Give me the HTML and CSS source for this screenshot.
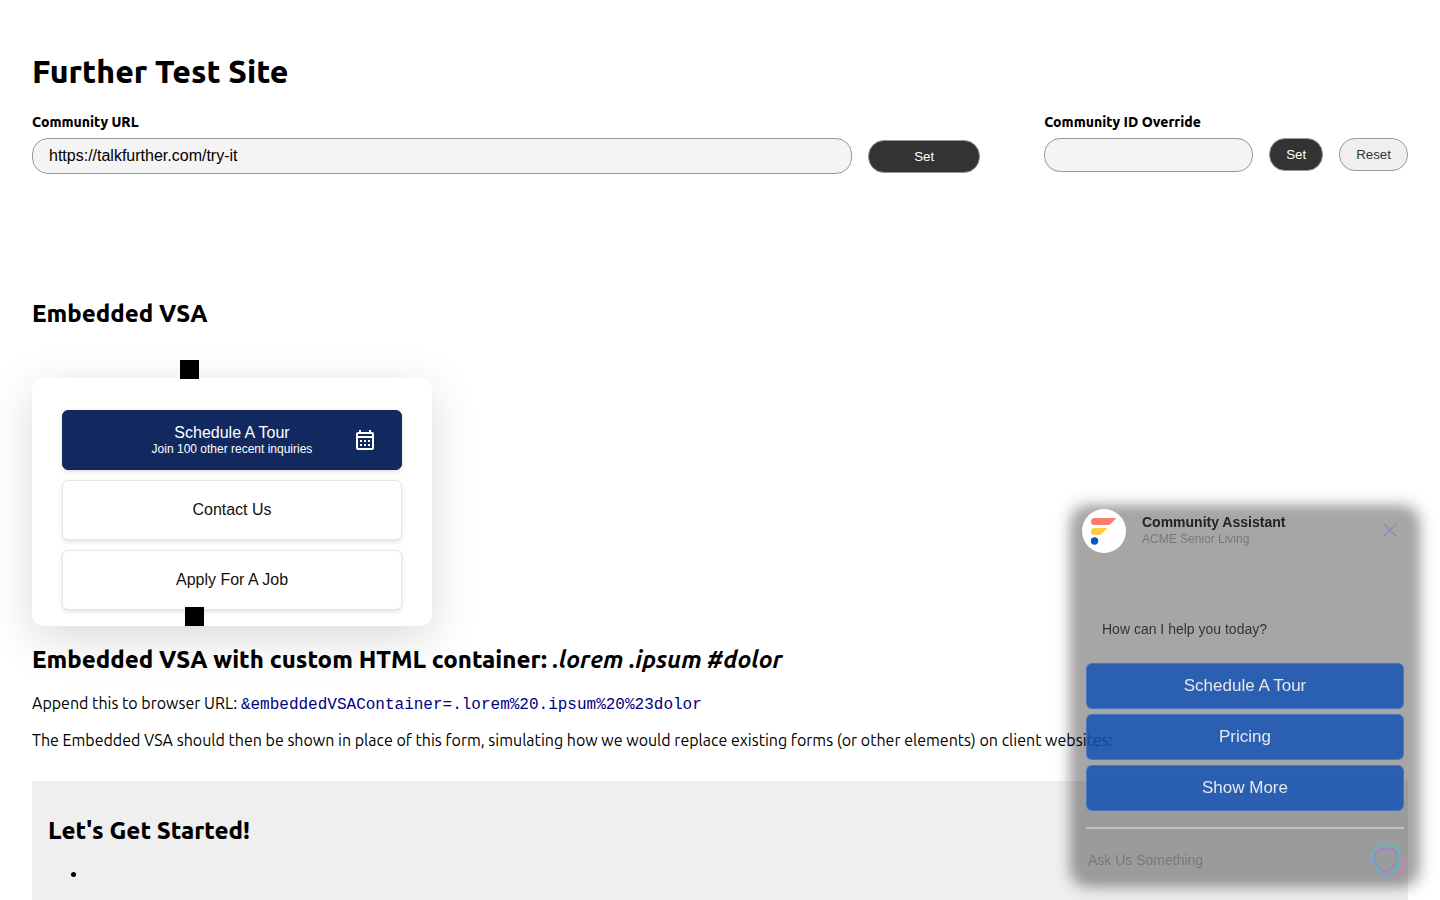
FILE: index.html
```
<!DOCTYPE html>
<html lang="en">
<head>
    <meta charset="UTF-8">
    <meta name="viewport" content="width=device-width, initial-scale=1.0">
    <title>Further Test Site</title>
    <link rel="stylesheet" href="styles.css">
</head>
<body>
    <header>
        <h1>Further Test Site</h1>
        <div class="settings">
            <form class="setting url-setting">
                <label for="community-url">Community URL</label>
                <div class="setting-row">
                    <input type="text" id="community-url" value="https://talkfurther.com/try-it">
                    <button type="button" class="dark">Set</button>
                </div>
            </form>
            <form class="setting id-setting">
                <label for="community-id">Community ID Override</label>
                <div class="setting-row">
                    <input type="text" id="community-id">
                    <button type="button" class="dark">Set</button>
                    <button type="reset">Reset</button>
                </div>
            </form>
        </div>
    </header>

    <main>
        <h2>Embedded VSA</h2>
        <section class="embedded-vsa">
            <span class="marker marker-top"></span>
            <button type="button" class="vsa-button primary">
                <span>Schedule A Tour</span>
                <small>Join 100 other recent inquiries</small>
                <svg class="calendar" width="24" height="24" viewBox="0 0 24 24" fill="#fff" aria-hidden="true">
                    <path d="M19 4h-1V2h-2v2H8V2H6v2H5c-1.1 0-2 .9-2 2v14c0 1.1.9 2 2 2h14c1.1 0 2-.9 2-2V6c0-1.1-.9-2-2-2zm0 16H5V10h14v10zm0-12H5V6h14v2zM7 12h2v2H7zm4 0h2v2h-2zm4 0h2v2h-2zM7 16h2v2H7zm4 0h2v2h-2zm4 0h2v2h-2z"/>
                </svg>
            </button>
            <button type="button" class="vsa-button">Contact Us</button>
            <button type="button" class="vsa-button">Apply For A Job</button>
            <span class="marker marker-bottom"></span>
        </section>

        <h2 class="container-title">Embedded VSA with custom HTML container: <em>.lorem .ipsum #dolor</em></h2>
        <p>Append this to browser URL: <code>&amp;embeddedVSAContainer=.lorem%20.ipsum%20%23dolor</code></p>
        <p>The Embedded VSA should then be shown in place of this form, simulating how we would replace existing forms (or other elements) on client websites:</p>

        <section class="get-started">
            <h2>Let's Get Started!</h2>
            <ul>
                <li></li>
            </ul>
        </section>
    </main>

    <!-- Floating chat assistant -->
    <aside class="assistant">
        <div class="assistant-header">
            <svg class="avatar" width="44" height="44" viewBox="0 0 44 44" aria-hidden="true">
                <circle cx="22" cy="22" r="22" fill="#fff"/>
                <path d="M12.500 9h22l-6 6q-1 1-3 1h-13a3.500 3.500 0 0 1 0-7z" fill="#ff7a68"/>
                <path d="M12.500 19h13l-5 5q-2 2-4 2h-4a3.500 3.500 0 0 1 0-7z" fill="#ffcd40"/>
                <circle cx="12.500" cy="32" r="3.700" fill="#005bbf"/>
            </svg>
            <div class="assistant-name">
                <strong>Community Assistant</strong>
                <span>ACME Senior Living</span>
            </div>
            <button type="button" class="close" aria-label="Close">
                <svg width="14" height="14" viewBox="0 0 14 14" fill="none" stroke="#8c93ad" stroke-width="2">
                    <path d="M0.500 0.500l13 13M13.500 0.500l-13 13"/>
                </svg>
            </button>
        </div>
        <p class="greeting">How can I help you today?</p>
        <div class="choices">
            <button type="button">Schedule A Tour</button>
            <button type="button">Pricing</button>
            <button type="button">Show More</button>
        </div>
        <div class="ask">
            <input type="text" placeholder="Ask Us Something" aria-label="Ask Us Something">
            <svg class="orb" width="36" height="36" viewBox="0 0 36 36" fill="none" stroke-width="2" aria-hidden="true">
                <path d="M6 14C8 6 17 4 24 8c7 4 12 9 12 15 0 6-7 11-15 11C14 33 4 22 6 14z" stroke="#cf7fb0"/>
                <path d="M7 13c3-6 12-8 18-5 6 4 7 9 4 13-3 5-9 8-14 8-6-1-10-11-8-16z" stroke="#9a86c0"/>
                <path d="M3 16C5 9 11 2 19 2c8 0 13 6 12 14-1 8-4 17-12 18-7 0-8-6-11-10-3-4-5-6-5-8z" stroke="#5bb8c0"/>
            </svg>
        </div>
    </aside>
</body>
</html>
```
FILE: styles.css
```
* {
    box-sizing: border-box;
}

body {
    font-family: Ubuntu, "Noto Sans", sans-serif;
    font-size: 16px;
    line-height: 18px;
    margin: 0;
    padding: 32px;
    background-color: #fff;
    color: #000;
}

button,
input {
    font-family: "Liberation Sans", Arial, sans-serif;
}

button {
    cursor: pointer;
}

h1,
h2 {
    font-weight: 800;
}

h1 {
    font-size: 32px;
    line-height: 36px;
    margin: 21px 0 23px;
}

h2 {
    font-size: 24px;
    line-height: 28px;
    margin: 20px 0;
}

h2 em {
    font-weight: 700;
}

p {
    margin: 18px 0;
}

code {
    font-family: "Liberation Mono", monospace;
    font-size: 16px;
    line-height: 16px;
    color: navy;
}

/* Settings */
.settings {
    display: flex;
    gap: 64px;
}

.url-setting {
    flex: 1;
}

.setting label {
    display: block;
    font-size: 14px;
    line-height: 20px;
    font-weight: 800;
    margin-bottom: 6px;
}

.setting-row {
    display: flex;
    align-items: flex-start;
    gap: 16px;
}

.url-setting .setting-row {
    align-items: center;
}

.setting input {
    height: 34px;
    padding: 0 16px;
    border: 1px solid #999;
    border-radius: 16px;
    background-color: #f4f4f4;
}

.url-setting input {
    flex: 1;
    height: 36px;
    font-size: 16px;
}

.id-setting input {
    width: 209px;
}

.setting button {
    height: 33px;
    padding: 0 16px;
    border: 1px solid #999;
    border-radius: 16px;
    background-color: #efefef;
    color: #333;
}

.setting button.dark {
    background-color: #333;
    color: #fff;
}

.url-setting button {
    width: 112px;
}

/* Embedded VSA */
main {
    margin-top: 126px;
}

.embedded-vsa {
    position: relative;
    display: flex;
    flex-direction: column;
    gap: 10px;
    max-width: 400px;
    margin-top: 50px;
    padding: 32px 30px 16px;
    border-radius: 12px;
    background-color: #fff;
    box-shadow: 0 12px 48px rgba(0, 0, 0, 0.15);
}

.vsa-button {
    position: relative;
    display: flex;
    flex-direction: column;
    align-items: center;
    justify-content: center;
    height: 60px;
    border: 1px solid #e6e6e6;
    border-radius: 6px;
    background-color: #fff;
    color: #111;
    font-size: 16px;
    line-height: 18px;
    box-shadow: 0 2px 4px rgba(0, 0, 0, 0.12);
}

.vsa-button.primary {
    border-color: #11295f;
    background-color: #11295f;
    color: #fff;
}

.vsa-button small {
    font-size: 12px;
    line-height: 14px;
}

.calendar {
    position: absolute;
    top: 17px;
    right: 24px;
}

.marker {
    position: absolute;
    width: 19px;
    height: 19px;
    background-color: #000;
}

.marker-top {
    top: -18px;
    left: 148px;
}

.marker-bottom {
    bottom: 0;
    left: 153px;
}

.container-title {
    position: relative;
}

.get-started {
    margin-top: 32px;
    padding: 16px;
    background-color: #efefef;
}

.get-started ul {
    min-height: 100px;
    margin: 0;
}

/* Chat assistant */
.assistant {
    position: fixed;
    right: 32px;
    bottom: 22px;
    width: 326px;
    font-family: "Liberation Sans", Arial, sans-serif;
}

.assistant::before {
    content: "";
    position: absolute;
    inset: 4px -4px -1px;
    z-index: -1;
    border-radius: 8px;
    background-color: rgba(0, 0, 0, 0.35);
    box-shadow: 0 0 14px 5px rgba(0, 0, 0, 0.55);
    filter: blur(5px);
}

.assistant-header {
    display: flex;
    gap: 16px;
    height: 44px;
}

.assistant-name {
    display: flex;
    flex: 1;
    flex-direction: column;
    padding-top: 4px;
    font-size: 12px;
    line-height: 16px;
    color: #777;
}

.assistant-name strong {
    font-size: 14px;
    line-height: 18px;
    color: #222;
}

.close {
    padding: 0 11px;
    border: none;
    background: none;
}

.greeting {
    margin: 66px 20px 24px;
    font-size: 14px;
    line-height: 20px;
    color: #333;
}

.choices {
    display: flex;
    flex-direction: column;
    gap: 5px;
    margin: 0 4px;
}

.choices button {
    height: 46px;
    border: 1px solid rgba(76, 121, 190, 0.9);
    border-radius: 6px;
    background-color: rgba(20, 82, 180, 0.85);
    color: #e8e8e8;
    font-size: 17px;
}

.ask {
    display: flex;
    align-items: center;
    margin: 16px 4px 0;
    padding-top: 13px;
    border-top: 2px solid #c0c0c0;
}

.ask input {
    flex: 1;
    min-width: 0;
    padding: 0 2px;
    border: none;
    background: none;
    font-size: 14px;
}

.ask input::placeholder {
    color: #777;
}

.orb {
    overflow: visible;
}
```
